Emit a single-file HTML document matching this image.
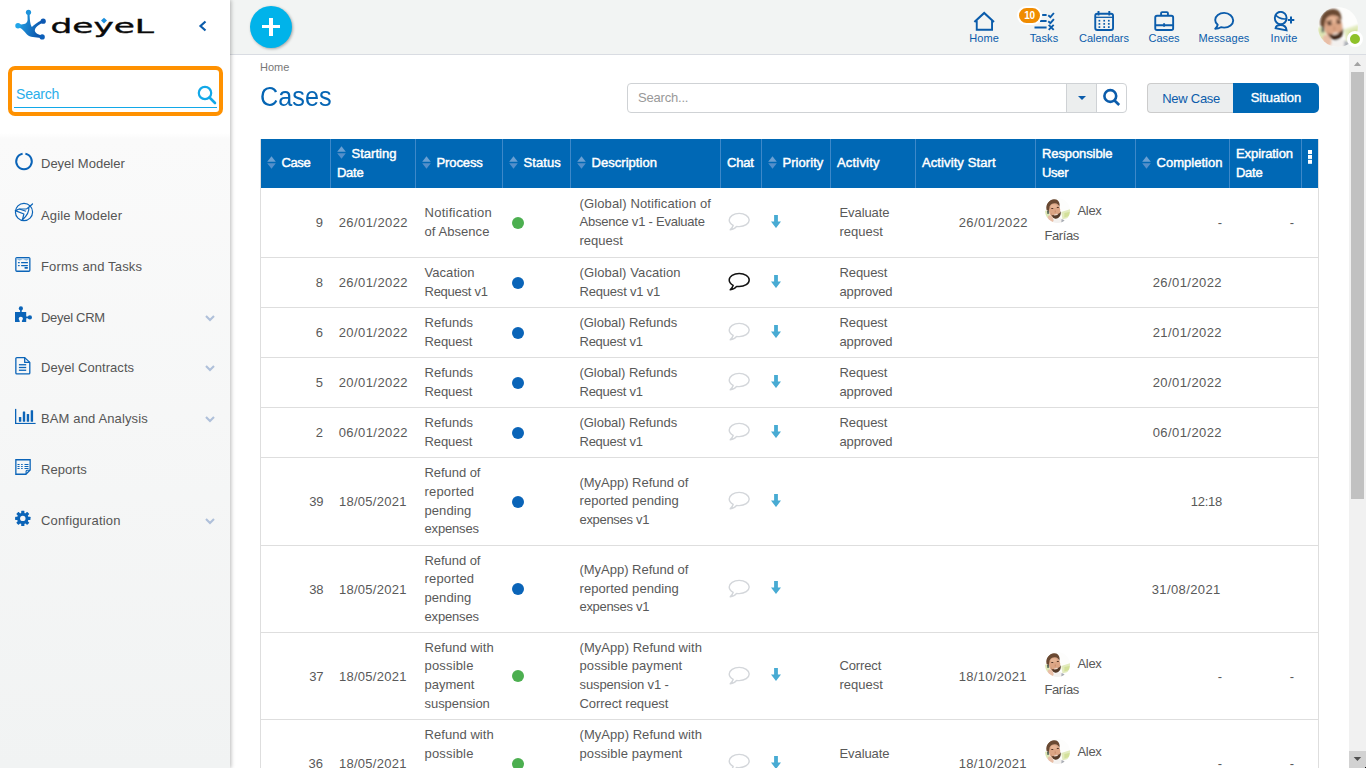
<!DOCTYPE html>
<html lang="en"><head><meta charset="utf-8"><title>Cases</title>
<style>
*{box-sizing:border-box;margin:0;padding:0}
html,body{width:1366px;height:768px;overflow:hidden;background:#fff;font-family:"Liberation Sans",sans-serif;font-size:13px;color:#555}
#side{position:absolute;left:0;top:0;width:230px;height:768px;background:linear-gradient(#fff 0,#fff 133px,#fafafa 139px,#f1f3f3 768px);box-shadow:1px 0 4px rgba(0,0,0,.28);z-index:5}
#top{position:absolute;left:230px;top:0;width:1136px;height:55px;background:#f2f4f3;border-bottom:1px solid #d9dce2}
#main{position:absolute;left:230px;top:56px;width:1119px;height:712px;background:#fff;overflow:hidden}
.nav{position:absolute;left:0;width:230px;height:20px;font-size:13px;color:#555}
.nav span{position:absolute;left:41px;top:3px;line-height:16px;white-space:nowrap}
.nav svg.i{position:absolute;left:14px;top:-3px}
.nav svg.ch{position:absolute;left:205px;top:7.500px}
#plus{position:absolute;left:20px;top:6px;width:42px;height:42px;border-radius:50%;background:#00b3ea;box-shadow:1px 1px 3px rgba(0,0,0,.32)}
#plus:before{content:"";position:absolute;left:12px;top:18.600px;width:17.800px;height:3.700px;background:#fff}
#plus:after{content:"";position:absolute;left:19.100px;top:11.800px;width:3.800px;height:18.200px;background:#fff}
.tb{position:absolute;top:0;height:56px;text-align:center;color:#0b5cab;font-size:11px}
.tb span{position:absolute;left:0;right:0;top:31px;line-height:14px;text-align:center;letter-spacing:.1px}
.tb svg{position:absolute;left:50%;top:9px;transform:translateX(-50%)}
#hdr{position:absolute;left:31px;top:83px;width:1057px;height:49px;background:#0068b5;color:#fff;font-weight:normal;-webkit-text-stroke:.45px #fff;font-size:13px}
.h{position:absolute;top:0;height:49px;border-left:1px solid #3d88c9;display:flex;align-items:center;padding-left:6px;line-height:18.500px;white-space:nowrap}
.h:first-child{border-left:none;padding-left:6px}
.h u,.c u{text-decoration:none}
.s{display:inline-block;margin-right:5.700px;margin-left:-.2px;vertical-align:-1.300px}
#tbl{position:absolute;left:30px;top:83px;width:1059px;height:700px;border-left:1px solid #dedede;border-right:1px solid #dedede}
.row{position:absolute;left:0;width:1057px;border-bottom:1px solid #dedede;box-sizing:content-box}
.c{position:absolute;top:0;height:100%;display:flex;align-items:center;padding:0 8px 0 9.500px;line-height:18.570px;color:#595959;font-size:13px;white-space:nowrap}
.c.r{justify-content:flex-end;padding-right:7px;padding-top:2px}
.chat{position:absolute;left:467.300px;top:calc(50% - 10.300px)}
.arr{position:absolute;left:510px;top:calc(50% - 7.600px)}
.dot{width:12px;height:12px;border-radius:50%;display:block;margin-left:0}
.dot.g{background:#4caf50}.dot.b{background:#0a64b8}
.usr{line-height:24.600px;position:relative;top:1px}
.usr b{font-weight:normal;margin-left:8px;position:relative;top:-1px}
.av{display:inline-block;width:25px;height:25px;vertical-align:-7.600px}
</style></head><body>
<svg width="0" height="0" style="position:absolute"><defs>
<filter id="bl" x="-10%" y="-10%" width="120%" height="120%"><feGaussianBlur stdDeviation=".900"/></filter>
<filter id="bl2" x="-10%" y="-10%" width="120%" height="120%"><feGaussianBlur stdDeviation="1.200"/></filter>
<clipPath id="cc"><circle cx="20" cy="20" r="20"/></clipPath>
</defs></svg>

<div id="side">
 <svg style="position:absolute;left:0;top:0" width="170" height="50" viewBox="0 0 170 50">
  <defs><linearGradient id="lg" x1="0" y1="0" x2="1" y2="0.300"><stop offset="0" stop-color="#27aaea"/><stop offset="1" stop-color="#0a52aa"/></linearGradient></defs>
  <path d="M27.400 12.500L27.600 19.500C27.300 23.500 25 24.800 19 24.300L18 27.200C22 28 24 31 27 34.500C30 37.800 35 36.600 41.500 38.200L42.600 35.400C38 35 35.200 33 34.800 30.500C35 27.200 38 24.600 43.800 22.400L42.300 20C37 22.400 33.800 25 31.800 27C30.300 24 29.700 21 29.600 12.500Z" fill="url(#lg)"/>
  <circle cx="28.500" cy="12.300" r="2.600" fill="#1c93dc"/><circle cx="18" cy="25.700" r="2.700" fill="#22a6e9"/><circle cx="43.200" cy="21.200" r="2.600" fill="#0c58b2"/><circle cx="42.200" cy="36.900" r="2.600" fill="#0c5fba"/>
  <text x="50.500" y="32.700" font-family="DejaVu Sans, Liberation Sans, sans-serif" font-size="18.800" fill="#0a0a0a" stroke="#0a0a0a" stroke-width=".35" textLength="103.500" lengthAdjust="spacingAndGlyphs">deyeL</text>
  <path d="M104 17.800l3 2.800-3 2.800-3-2.800z" fill="#1c8fdc"/>
 </svg>
 <svg style="position:absolute;left:198px;top:20px" width="10" height="12" viewBox="0 0 10 12"><path d="M7.500 1.500L2.500 6l5 4.500" fill="none" stroke="#0b5cab" stroke-width="2.200"/></svg>
 <div style="position:absolute;left:8px;top:66px;width:215px;height:50px;border:4px solid #ff9100;border-radius:7px;background:#fff"></div>
 <div style="position:absolute;left:14px;top:107px;width:203px;height:1px;background:#12a8e8"></div>
 <div style="position:absolute;left:16px;top:86px;font-size:14px;color:#2aaeea;line-height:17px;letter-spacing:-.2px">Search</div>
 <svg style="position:absolute;left:196px;top:84px" width="21" height="21" viewBox="0 0 21 21"><circle cx="9" cy="9" r="6.200" fill="none" stroke="#12a8e8" stroke-width="2.200"/><path d="M13.500 13.500L19 19" stroke="#12a8e8" stroke-width="2.600" stroke-linecap="round"/></svg>

 <div class="nav" style="top:153px"><svg class="i" width="22" height="22" viewBox="0 0 22 22"><path d="M11.400 3.720A7.800 7.800 0 1 1 8.600 3.720" fill="none" stroke="#0b64b8" stroke-width="2"/></svg><span style="letter-spacing:0px">Deyel Modeler</span></div>
 <div class="nav" style="top:205px"><svg class="i" width="22" height="22" viewBox="0 0 22 22"><g fill="none" stroke="#0b64b8" stroke-width="1.200"><circle cx="10" cy="10" r="8.600"/><path d="M18.500 2C15 4.500 13.500 6.800 12.200 7L5.200 7L1.300 8.600L9.900 12L8.300 18.200C12.500 14 15.500 9.500 14.800 5.300Z" fill="#fafafa" stroke-linejoin="round"/><path d="M5.200 7L12 9.300"/></g></svg><span style="letter-spacing:0.13px">Agile Modeler</span></div>
 <div class="nav" style="top:256px"><svg class="i" width="22" height="22" viewBox="0 0 22 22"><rect x="1.850" y="4.550" width="14" height="13.700" rx="1" fill="none" stroke="#0b64b8" stroke-width="1.300"/><path d="M2.500 5.200h12.800v.8l-3 1.800-3.400-1.800-3.400 1.800-3-1.800z" fill="#8fbce3"/><g fill="#0b64b8"><rect x="3.900" y="9" width="1.900" height="1.300" rx=".6"/><rect x="7" y="9" width="7" height="1.300" rx=".6"/><rect x="3.900" y="11.900" width="1.900" height="1.300" rx=".6"/><rect x="7" y="11.900" width="7" height="1.300" rx=".6"/><rect x="10.400" y="14" width="3.600" height="1.700" rx=".8"/></g></svg><span style="letter-spacing:0.16px">Forms and Tasks</span></div>
 <div class="nav" style="top:307px"><svg class="i" width="22" height="22" viewBox="0 0 22 22"><g fill="#0b64b8"><rect x="1" y="8" width="11.200" height="10"/><circle cx="6.900" cy="4.400" r="2.100"/><rect x="6.100" y="5" width="1.600" height="4"/><circle cx="15.900" cy="13.400" r="2.100"/><rect x="12" y="12.500" width="3" height="1.800"/></g><circle cx="6.800" cy="14.800" r="2.100" fill="#f9f9f9"/><rect x="5.700" y="15.500" width="2.200" height="3" fill="#f9f9f9"/></svg><span style="letter-spacing:-0.3px">Deyel CRM</span><svg class="ch" width="10" height="7" viewBox="0 0 10 7"><path d="M1 1l4 4 4-4" fill="none" stroke="#afc0da" stroke-width="2.100"/></svg></div>
 <div class="nav" style="top:357px"><svg class="i" width="22" height="22" viewBox="0 0 22 22"><g fill="none" stroke="#0b64b8" stroke-width="1.300" stroke-linejoin="round"><path d="M1.850 4.600a1 1 0 0 1 1-1h7.850l5.100 4.800v10.500a1 1 0 0 1-1 1h-11.950a1 1 0 0 1-1-1z"/><path d="M10.700 3.600v4.800h5.100"/></g><g fill="#0b64b8"><rect x="4.900" y="10.100" width="7.300" height="1.300"/><rect x="4.900" y="12.850" width="7.300" height="1.300"/><rect x="4.900" y="15.600" width="7.300" height="1.300"/></g></svg><span style="letter-spacing:0.04px">Deyel Contracts</span><svg class="ch" width="10" height="7" viewBox="0 0 10 7"><path d="M1 1l4 4 4-4" fill="none" stroke="#afc0da" stroke-width="2.100"/></svg></div>
 <div class="nav" style="top:408px"><svg class="i" width="24" height="22" viewBox="0 0 24 22"><g fill="#0b64b8"><rect x="1" y="3.900" width="1.300" height="15.100"/><rect x="1" y="17.900" width="20.600" height="1.100"/><rect x="4.900" y="12" width="2.400" height="4.700" rx=".5"/><rect x="8.800" y="6.500" width="2.400" height="10.200" rx=".5"/><rect x="12.750" y="9.100" width="2.400" height="7.600" rx=".5"/><rect x="16.700" y="5.200" width="2.400" height="11.500" rx=".5"/></g></svg><span style="letter-spacing:0.13px">BAM and Analysis</span><svg class="ch" width="10" height="7" viewBox="0 0 10 7"><path d="M1 1l4 4 4-4" fill="none" stroke="#afc0da" stroke-width="2.100"/></svg></div>
 <div class="nav" style="top:459px"><svg class="i" width="22" height="22" viewBox="0 0 22 22"><g fill="none" stroke="#0b64b8" stroke-width="1.300"><path d="M1.850 3.750h14.300v10.300l-4.300 4.200h-10z"/><path d="M16.100 14.200h-3a1 1 0 0 0-1 1v3" stroke-width="1.100"/></g><g fill="#0b64b8"><rect x="3.400" y="8" width="2.300" height="1" rx=".5"/><rect x="7" y="8" width="1.800" height="1" rx=".5"/><rect x="10.400" y="8" width="4.200" height="1" rx=".5"/><rect x="3.400" y="10.050" width="2.300" height="1" rx=".5"/><rect x="7" y="10.050" width="1.800" height="1" rx=".5"/><rect x="10.400" y="10.050" width="4.200" height="1" rx=".5"/><rect x="3.400" y="12.050" width="2.300" height="1" rx=".5"/><rect x="7" y="12.050" width="1.800" height="1" rx=".5"/><rect x="10.400" y="12.050" width="4.200" height="1" rx=".5"/></g></svg><span style="letter-spacing:0.05px">Reports</span></div>
 <div class="nav" style="top:510px"><svg class="i" width="22" height="22" viewBox="0 0 22 22"><g transform="translate(8.800 11.400)"><g fill="#0b64b8"><rect x="-1.600" y="-7.700" width="3.200" height="15.400" rx=".4"/><rect x="-1.600" y="-7.700" width="3.200" height="15.400" rx=".4" transform="rotate(45)"/><rect x="-1.600" y="-7.700" width="3.200" height="15.400" rx=".4" transform="rotate(90)"/><rect x="-1.600" y="-7.700" width="3.200" height="15.400" rx=".4" transform="rotate(135)"/><circle r="5.700"/></g><circle r="2.700" fill="#f4f5f6"/></g></svg><span style="letter-spacing:0.17px">Configuration</span><svg class="ch" width="10" height="7" viewBox="0 0 10 7"><path d="M1 1l4 4 4-4" fill="none" stroke="#afc0da" stroke-width="2.100"/></svg></div>
</div>

<div id="top">
 <div id="plus"></div>
 <svg style="position:absolute;left:0;top:0" width="1136" height="56" viewBox="230 0 1136 56"><g fill="none" stroke="#0b5cab" stroke-width="1.900">
  <path d="M975.200 21.200L984.200 13L993.200 21.200" stroke-width="2.100" stroke-linecap="square"/><path d="M976.750 20.500V29.750H992.050V20.500"/>
  <path d="M1042.200 15H1046.600M1040 21.100H1046.600M1034.500 27.400H1046.600" stroke-width="2"/><path d="M1048.300 15.200l2.100 1.900 3.500-4.100M1048.300 21.300l2.100 1.900 3.500-4.100M1048.700 24.900l5 5M1053.700 24.900l-5 5"/>
  <rect x="1095.250" y="13.750" width="17.800" height="16.200" rx="2"/><path d="M1095.500 17.300h17.400" stroke-width="1.300"/><path d="M1098.500 11v4.500M1109.300 11v4.500"/>
  <rect x="1155.250" y="15.750" width="17.900" height="14.200" rx="1.800"/><path d="M1161.100 15.500v-2.400a1 1 0 0 1 1-1h4.800a1 1 0 0 1 1 1v2.400M1155.500 25.200h17.500M1164.100 23.200v3.600"/>
  <path d="M1224.200 12.900c-5 0-9 3.100-9 7 0 1.900 1 3.700 2.500 4.900-.3 1.600-1.100 2.800-2.500 3.900 2.400-.1 4.300-.7 5.700-1.500 1 .3 2.200.4 3.300.4 5 0 9-3.100 9-7s-4-7.700-9-7.700z" stroke-linejoin="round"/>
  <ellipse cx="1280.700" cy="18.100" rx="5.900" ry="6.200"/><path d="M1275.300 14.500c2.500 3.500 7 4.800 11.300 4.300" stroke-width="1.500"/><path d="M1275.600 14.200c1.500-3 5-4.200 8-2.600-2.500.2-5.500 1.500-8 2.600z" fill="#0b5cab" stroke="none"/><path d="M1275.600 28.200c.3-2.200 2.200-3.200 5-3.200s5.600 1.300 6 5.400z"/><path d="M1291 16.600v6.800M1287.800 20h6.500" stroke-width="2"/>
 </g><g fill="#0b5cab"><rect x="1098.55" y="19.85" width="1.700" height="1.700"/><rect x="1098.55" y="23.05" width="1.700" height="1.700"/><rect x="1098.55" y="26.25" width="1.700" height="1.700"/><rect x="1103.35" y="19.85" width="1.700" height="1.700"/><rect x="1103.35" y="23.05" width="1.700" height="1.700"/><rect x="1103.35" y="26.25" width="1.700" height="1.700"/><rect x="1107.95" y="19.85" width="1.700" height="1.700"/><rect x="1107.95" y="23.05" width="1.700" height="1.700"/><rect x="1107.95" y="26.25" width="1.700" height="1.700"/></g></svg>
 <div class="tb" style="left:714px;width:80px"><span>Home</span></div>
 <div class="tb" style="left:774px;width:80px"><span>Tasks</span></div>
 <div class="tb" style="left:834px;width:80px"><span style="letter-spacing:-.02px">Calendars</span></div>
 <div class="tb" style="left:894px;width:80px"><span style="letter-spacing:-.08px">Cases</span></div>
 <div class="tb" style="left:954px;width:80px"><span>Messages</span></div>
 <div class="tb" style="left:1014px;width:80px"><span>Invite</span></div>
 <div style="position:absolute;left:787px;top:6px;width:25px;height:19px;border-radius:9.500px;background:#f08c00;border:2px solid #fff;color:#fff;font-size:10px;font-weight:bold;line-height:15px;text-align:center;box-sizing:border-box;letter-spacing:-.2px">10</div>
 <svg style="position:absolute;left:1088px;top:7px" width="40" height="40" viewBox="0 0 40 40"><g clip-path="url(#cc)"><rect width="40" height="40" fill="#fdfdfc"/><g filter="url(#bl)">
<path d="M26 22.500L41 17.500V31L28 34z" fill="#e2ebbd"/><path d="M31 24l10-2v6l-10 3z" fill="#d3e09a"/><ellipse cx="2.500" cy="27" rx="5" ry="7" fill="#dde6b4"/>
<path d="M8 41L12 35 24 32 31 35V41z" fill="#f3f1ef"/><path d="M26.500 33.500l4.500 2v5h-5z" fill="#a9adb5"/>
<ellipse cx="15.200" cy="19.500" rx="9.200" ry="11.800" fill="#dca585" transform="rotate(-6 15.200 19.500)"/>
<ellipse cx="14" cy="13" rx="5" ry="3" fill="#e6b596"/>
<path d="M2.500 19C.8 9.500 6 2.500 14 2c5-.400 8.500 2 9.300 7.500.2 1.500 0 3-.3 4.500-1.500-3.500-4-5.700-7.500-5.700-3.500 0-6.500 1.500-8 5.200L6 21z" fill="#6b4a33"/>
<path d="M9.500 25c1 2 3 2.800 5.500 2.300 3-.800 6-1.200 8.500-3.300.8-1 1.400-2 1.600-3.500.8 5.500-.700 9.500-4 11.600-3 1.700-6.300 1.400-8.700-1.300-1.400-1.700-2.200-3.700-2.400-5.800z" fill="#432c1f"/>
<ellipse cx="17.500" cy="26.600" rx="3.200" ry="1.200" fill="#ecd5c8" transform="rotate(-10 17.500 26.600)"/>
<ellipse cx="11.600" cy="16.900" rx="2.300" ry="1.400" fill="#3a2419"/><ellipse cx="20.600" cy="15.300" rx="2.300" ry="1.400" fill="#3a2419"/><path d="M8.500 14.800l5.500-1.200M18 12.800l5-.8" stroke="#5a3d2b" stroke-width="1.200" fill="none"/>
<path d="M16 18.500l1.700 4.200-2.300.5z" fill="#c58b6a"/>
<rect x="3.600" y="20" width="2.500" height="5.500" rx="1" fill="#46564f"/>
<ellipse cx="9" cy="33.500" rx="4.200" ry="6" fill="#e8bea6" transform="rotate(-25 9 33.500)"/>
</g></g></svg>
 <div style="position:absolute;left:1117px;top:31px;width:16px;height:16px;border-radius:50%;background:#8fc22a;border:3px solid #fff"></div>
</div>

<div id="main">
 <div style="position:absolute;left:30px;top:5px;font-size:11px;color:#777;line-height:13px">Home</div>
 <div style="position:absolute;left:30px;top:25px;font-size:27px;color:#0565b4;line-height:32px;letter-spacing:0;transform:scaleX(.935);transform-origin:0 0" id="ttl">Cases</div>
 <div style="position:absolute;left:397px;top:27px;width:500px;height:30px;border:1px solid #cfd2d5;border-radius:4px;background:#fff"></div>
 <div style="position:absolute;left:836px;top:28px;width:31px;height:28px;background:#eceeee;border-left:1px solid #cfd2d5;border-right:1px solid #cfd2d5"></div>
 <div style="position:absolute;left:847.800px;top:40.200px;border:4.200px solid transparent;border-top:4.700px solid #0b5cab;border-bottom:none"></div>
 <svg style="position:absolute;left:871px;top:31px" width="22" height="22" viewBox="0 0 22 22"><circle cx="9.300" cy="9" r="5.900" fill="none" stroke="#0b5cab" stroke-width="2.600"/><path d="M13.300 13.300L18.200 17.900" stroke="#0b5cab" stroke-width="2.700"/></svg>
 <div style="position:absolute;left:408px;top:34px;font-size:13px;color:#999;line-height:16px;letter-spacing:-.2px">Search...</div>
 <div style="position:absolute;left:917px;top:27px;width:87px;height:30px;border:1px solid #ccc;border-right:none;border-radius:4px 0 0 4px;background:#eceeef;color:#0b5cab;font-size:13px;line-height:29px;text-align:center;letter-spacing:-.27px;padding-left:.3px" id="nc">New Case</div>
 <div style="position:absolute;left:1003px;top:27px;width:86px;height:30px;border-radius:0 5px 5px 0;background:#0068b5;color:#fff;font-size:13px;-webkit-text-stroke:.4px #fff;line-height:29px;text-align:center;letter-spacing:0px" id="sit">Situation</div>

 <div id="tbl">
<div class="row" style="top:49px;height:69px"><div class="c r" style="left:0px;width:69px;"><span><u>9</u></span></div><div class="c r" style="left:69px;width:85px;"><span><u style="letter-spacing:0.421px">26/01/2022</u></span></div><div class="c " style="left:154px;width:87px;"><span><u style="letter-spacing:0.273px">Notification</u><br><u style="letter-spacing:0.064px">of Absence</u></span></div><div class="c " style="left:241px;width:68px;"><span class="dot g"></span></div><div class="c " style="left:309px;width:150px;"><span><u style="letter-spacing:0.123px">(Global) Notification of</u><br><u style="letter-spacing:-0.230px">Absence v1 - Evaluate</u><br><u style="letter-spacing:0.000px">request</u></span></div><svg class="chat" viewBox="0 0 23 19" width="23" height="19"><path d="M11.200 1.400c-5.500 0-10 2.950-10 6.600 0 2.200 1.600 4.100 4 5.300-.5 1.800-1.500 3.300-3 4.500 2.800-.3 5-1.500 6.400-3.400.8.100 1.700.200 2.600.200 5.500 0 10-2.950 10-6.600s-4.500-6.600-10-6.600z" fill="none" stroke="#d3d6da" stroke-width="1.400" stroke-linejoin="round"/></svg><svg class="arr" viewBox="0 0 10 13.200" width="10" height="13.200"><path d="M3.100 0h3.800v6.500h3.100L5 13.100 0 6.500h3.100z" fill="#48abd3"/></svg><div class="c " style="left:569px;width:85px;"><span><u style="letter-spacing:-0.084px">Evaluate</u><br><u style="letter-spacing:0.000px">request</u></span></div><div class="c r" style="left:654px;width:120px;"><span><u style="letter-spacing:0.421px">26/01/2022</u></span></div><div class="c " style="left:774px;width:100px;"><span class="usr"><svg class="av" width="25" height="25" viewBox="0 0 40 40"><g clip-path="url(#cc)"><rect width="40" height="40" fill="#fdfdfc"/><g filter="url(#bl2)"><path d="M26 22.500L41 17.500V31L28 34z" fill="#e2ebbd"/><path d="M31 24l10-2v6l-10 3z" fill="#d3e09a"/><ellipse cx="2.500" cy="27" rx="5" ry="7" fill="#dde6b4"/><path d="M8 41L12 35 24 32 31 35V41z" fill="#f3f1ef"/><path d="M26.500 33.500l4.500 2v5h-5z" fill="#a9adb5"/><ellipse cx="15.200" cy="19.500" rx="9.200" ry="11.800" fill="#dca585" transform="rotate(-6 15.200 19.500)"/><ellipse cx="14" cy="13" rx="5" ry="3" fill="#e6b596"/><path d="M2.500 19C.8 9.500 6 2.500 14 2c5-.400 8.500 2 9.300 7.500.2 1.500 0 3-.3 4.500-1.500-3.500-4-5.700-7.500-5.700-3.500 0-6.500 1.500-8 5.200L6 21z" fill="#6b4a33"/><path d="M9.500 25c1 2 3 2.800 5.500 2.300 3-.800 6-1.200 8.500-3.300.8-1 1.400-2 1.600-3.500.8 5.500-.700 9.500-4 11.600-3 1.700-6.300 1.400-8.700-1.300-1.400-1.700-2.200-3.700-2.400-5.800z" fill="#553a29"/><ellipse cx="17.500" cy="26.600" rx="3.200" ry="1.200" fill="#ecd5c8" transform="rotate(-10 17.500 26.600)"/><ellipse cx="11.600" cy="16.700" rx="1.900" ry=".900" fill="#4a2f22"/><ellipse cx="20.600" cy="15.100" rx="1.900" ry=".900" fill="#4a2f22"/><path d="M16 18.500l1.700 4.200-2.300.5z" fill="#c58b6a"/><rect x="3.600" y="20" width="2.500" height="5.500" rx="1" fill="#46564f"/><ellipse cx="9" cy="33.500" rx="4.200" ry="6" fill="#e8bea6" transform="rotate(-25 9 33.500)"/></g></g></svg><b><u style="letter-spacing:-0.333px">Alex</u></b><br><u style="letter-spacing:-0.400px">Farías</u></span></div><div class="c r" style="left:874px;width:94px;"><span><u>-</u></span></div><div class="c r" style="left:968px;width:72px;"><span><u>-</u></span></div></div>
<div class="row" style="top:119px;height:49px"><div class="c r" style="left:0px;width:69px;"><span><u>8</u></span></div><div class="c r" style="left:69px;width:85px;"><span><u style="letter-spacing:0.421px">26/01/2022</u></span></div><div class="c " style="left:154px;width:87px;"><span><u style="letter-spacing:0.059px">Vacation</u><br><u style="letter-spacing:-0.258px">Request v1</u></span></div><div class="c " style="left:241px;width:68px;"><span class="dot b"></span></div><div class="c " style="left:309px;width:150px;"><span><u style="letter-spacing:0.101px">(Global) Vacation</u><br><u style="letter-spacing:-0.191px">Request v1 v1</u></span></div><svg class="chat" viewBox="0 0 23 19" width="23" height="19"><path d="M11.200 1.400c-5.500 0-10 2.950-10 6.600 0 2.200 1.600 4.100 4 5.300-.5 1.800-1.500 3.300-3 4.500 2.800-.3 5-1.500 6.400-3.400.8.100 1.700.200 2.600.200 5.500 0 10-2.950 10-6.600s-4.500-6.600-10-6.600z" fill="none" stroke="#111" stroke-width="1.500" stroke-linejoin="round"/></svg><svg class="arr" viewBox="0 0 10 13.200" width="10" height="13.200"><path d="M3.100 0h3.800v6.500h3.100L5 13.100 0 6.500h3.100z" fill="#48abd3"/></svg><div class="c " style="left:569px;width:85px;"><span><u style="letter-spacing:-0.102px">Request</u><br><u style="letter-spacing:-0.160px">approved</u></span></div><div class="c r" style="left:874px;width:94px;"><span><u style="letter-spacing:0.421px">26/01/2022</u></span></div></div>
<div class="row" style="top:169px;height:49px"><div class="c r" style="left:0px;width:69px;"><span><u>6</u></span></div><div class="c r" style="left:69px;width:85px;"><span><u style="letter-spacing:0.421px">20/01/2022</u></span></div><div class="c " style="left:154px;width:87px;"><span><u style="letter-spacing:0.014px">Refunds</u><br><u style="letter-spacing:-0.102px">Request</u></span></div><div class="c " style="left:241px;width:68px;"><span class="dot b"></span></div><div class="c " style="left:309px;width:150px;"><span><u style="letter-spacing:-0.041px">(Global) Refunds</u><br><u style="letter-spacing:-0.258px">Request v1</u></span></div><svg class="chat" viewBox="0 0 23 19" width="23" height="19"><path d="M11.200 1.400c-5.500 0-10 2.950-10 6.600 0 2.200 1.600 4.100 4 5.300-.5 1.800-1.500 3.300-3 4.500 2.800-.3 5-1.500 6.400-3.400.8.100 1.700.200 2.600.200 5.500 0 10-2.950 10-6.600s-4.500-6.600-10-6.600z" fill="none" stroke="#d3d6da" stroke-width="1.400" stroke-linejoin="round"/></svg><svg class="arr" viewBox="0 0 10 13.200" width="10" height="13.200"><path d="M3.100 0h3.800v6.500h3.100L5 13.100 0 6.500h3.100z" fill="#48abd3"/></svg><div class="c " style="left:569px;width:85px;"><span><u style="letter-spacing:-0.102px">Request</u><br><u style="letter-spacing:-0.160px">approved</u></span></div><div class="c r" style="left:874px;width:94px;"><span><u style="letter-spacing:0.421px">21/01/2022</u></span></div></div>
<div class="row" style="top:219px;height:49px"><div class="c r" style="left:0px;width:69px;"><span><u>5</u></span></div><div class="c r" style="left:69px;width:85px;"><span><u style="letter-spacing:0.421px">20/01/2022</u></span></div><div class="c " style="left:154px;width:87px;"><span><u style="letter-spacing:0.014px">Refunds</u><br><u style="letter-spacing:-0.102px">Request</u></span></div><div class="c " style="left:241px;width:68px;"><span class="dot b"></span></div><div class="c " style="left:309px;width:150px;"><span><u style="letter-spacing:-0.041px">(Global) Refunds</u><br><u style="letter-spacing:-0.258px">Request v1</u></span></div><svg class="chat" viewBox="0 0 23 19" width="23" height="19"><path d="M11.200 1.400c-5.500 0-10 2.950-10 6.600 0 2.200 1.600 4.100 4 5.300-.5 1.800-1.500 3.300-3 4.500 2.800-.3 5-1.500 6.400-3.400.8.100 1.700.200 2.600.200 5.500 0 10-2.950 10-6.600s-4.500-6.600-10-6.600z" fill="none" stroke="#d3d6da" stroke-width="1.400" stroke-linejoin="round"/></svg><svg class="arr" viewBox="0 0 10 13.200" width="10" height="13.200"><path d="M3.100 0h3.800v6.500h3.100L5 13.100 0 6.500h3.100z" fill="#48abd3"/></svg><div class="c " style="left:569px;width:85px;"><span><u style="letter-spacing:-0.102px">Request</u><br><u style="letter-spacing:-0.160px">approved</u></span></div><div class="c r" style="left:874px;width:94px;"><span><u style="letter-spacing:0.421px">20/01/2022</u></span></div></div>
<div class="row" style="top:269px;height:49px"><div class="c r" style="left:0px;width:69px;"><span><u>2</u></span></div><div class="c r" style="left:69px;width:85px;"><span><u style="letter-spacing:0.421px">06/01/2022</u></span></div><div class="c " style="left:154px;width:87px;"><span><u style="letter-spacing:0.014px">Refunds</u><br><u style="letter-spacing:-0.102px">Request</u></span></div><div class="c " style="left:241px;width:68px;"><span class="dot b"></span></div><div class="c " style="left:309px;width:150px;"><span><u style="letter-spacing:-0.041px">(Global) Refunds</u><br><u style="letter-spacing:-0.258px">Request v1</u></span></div><svg class="chat" viewBox="0 0 23 19" width="23" height="19"><path d="M11.200 1.400c-5.500 0-10 2.950-10 6.600 0 2.200 1.600 4.100 4 5.300-.5 1.800-1.500 3.300-3 4.500 2.800-.3 5-1.500 6.400-3.400.8.100 1.700.200 2.600.200 5.500 0 10-2.950 10-6.600s-4.500-6.600-10-6.600z" fill="none" stroke="#d3d6da" stroke-width="1.400" stroke-linejoin="round"/></svg><svg class="arr" viewBox="0 0 10 13.200" width="10" height="13.200"><path d="M3.100 0h3.800v6.500h3.100L5 13.100 0 6.500h3.100z" fill="#48abd3"/></svg><div class="c " style="left:569px;width:85px;"><span><u style="letter-spacing:-0.102px">Request</u><br><u style="letter-spacing:-0.160px">approved</u></span></div><div class="c r" style="left:874px;width:94px;"><span><u style="letter-spacing:0.421px">06/01/2022</u></span></div></div>
<div class="row" style="top:319px;height:87px"><div class="c r" style="left:0px;width:69px;"><span><u style="letter-spacing:-0.400px">39</u></span></div><div class="c r" style="left:69px;width:85px;"><span><u style="letter-spacing:0.269px;margin-right:1.300px">18/05/2021</u></span></div><div class="c " style="left:154px;width:87px;"><span><u style="letter-spacing:-0.050px">Refund of</u><br><u style="letter-spacing:0.169px">reported</u><br><u style="letter-spacing:0.066px">pending</u><br><u style="letter-spacing:-0.160px">expenses</u></span></div><div class="c " style="left:241px;width:68px;"><span class="dot b"></span></div><div class="c " style="left:309px;width:150px;"><span><u style="letter-spacing:-0.018px">(MyApp) Refund of</u><br><u style="letter-spacing:0.062px">reported pending</u><br><u style="letter-spacing:-0.310px">expenses v1</u></span></div><svg class="chat" viewBox="0 0 23 19" width="23" height="19"><path d="M11.200 1.400c-5.500 0-10 2.950-10 6.600 0 2.200 1.600 4.100 4 5.300-.5 1.800-1.500 3.300-3 4.500 2.800-.3 5-1.500 6.400-3.400.8.100 1.700.200 2.600.200 5.500 0 10-2.950 10-6.600s-4.500-6.600-10-6.600z" fill="none" stroke="#d3d6da" stroke-width="1.400" stroke-linejoin="round"/></svg><svg class="arr" viewBox="0 0 10 13.200" width="10" height="13.200"><path d="M3.100 0h3.800v6.500h3.100L5 13.100 0 6.500h3.100z" fill="#48abd3"/></svg><div class="c r" style="left:874px;width:94px;"><span><u style="letter-spacing:-0.250px">12:18</u></span></div></div>
<div class="row" style="top:407px;height:86px"><div class="c r" style="left:0px;width:69px;"><span><u style="letter-spacing:-0.400px">38</u></span></div><div class="c r" style="left:69px;width:85px;"><span><u style="letter-spacing:0.269px;margin-right:1.300px">18/05/2021</u></span></div><div class="c " style="left:154px;width:87px;"><span><u style="letter-spacing:-0.050px">Refund of</u><br><u style="letter-spacing:0.169px">reported</u><br><u style="letter-spacing:0.066px">pending</u><br><u style="letter-spacing:-0.160px">expenses</u></span></div><div class="c " style="left:241px;width:68px;"><span class="dot b"></span></div><div class="c " style="left:309px;width:150px;"><span><u style="letter-spacing:-0.018px">(MyApp) Refund of</u><br><u style="letter-spacing:0.062px">reported pending</u><br><u style="letter-spacing:-0.310px">expenses v1</u></span></div><svg class="chat" viewBox="0 0 23 19" width="23" height="19"><path d="M11.200 1.400c-5.500 0-10 2.950-10 6.600 0 2.200 1.600 4.100 4 5.300-.5 1.800-1.500 3.300-3 4.500 2.800-.3 5-1.500 6.400-3.400.8.100 1.700.200 2.600.200 5.500 0 10-2.950 10-6.600s-4.500-6.600-10-6.600z" fill="none" stroke="#d3d6da" stroke-width="1.400" stroke-linejoin="round"/></svg><svg class="arr" viewBox="0 0 10 13.200" width="10" height="13.200"><path d="M3.100 0h3.800v6.500h3.100L5 13.100 0 6.500h3.100z" fill="#48abd3"/></svg><div class="c r" style="left:874px;width:94px;"><span><u style="letter-spacing:0.389px;margin-right:1.300px">31/08/2021</u></span></div></div>
<div class="row" style="top:494px;height:86px"><div class="c r" style="left:0px;width:69px;"><span><u style="letter-spacing:-0.400px">37</u></span></div><div class="c r" style="left:69px;width:85px;"><span><u style="letter-spacing:0.269px;margin-right:1.300px">18/05/2021</u></span></div><div class="c " style="left:154px;width:87px;"><span><u style="letter-spacing:0.050px">Refund with</u><br><u style="letter-spacing:0.168px">possible</u><br><u style="letter-spacing:0.000px">payment</u><br><u style="letter-spacing:-0.048px">suspension</u></span></div><div class="c " style="left:241px;width:68px;"><span class="dot g"></span></div><div class="c " style="left:309px;width:150px;"><span><u style="letter-spacing:0.056px">(MyApp) Refund with</u><br><u style="letter-spacing:0.100px">possible payment</u><br><u style="letter-spacing:-0.116px">suspension v1 -</u><br><u style="letter-spacing:-0.048px">Correct request</u></span></div><svg class="chat" viewBox="0 0 23 19" width="23" height="19"><path d="M11.200 1.400c-5.500 0-10 2.950-10 6.600 0 2.200 1.600 4.100 4 5.300-.5 1.800-1.500 3.300-3 4.500 2.800-.3 5-1.500 6.400-3.400.8.100 1.700.200 2.600.200 5.500 0 10-2.950 10-6.600s-4.500-6.600-10-6.600z" fill="none" stroke="#d3d6da" stroke-width="1.400" stroke-linejoin="round"/></svg><svg class="arr" viewBox="0 0 10 13.200" width="10" height="13.200"><path d="M3.100 0h3.800v6.500h3.100L5 13.100 0 6.500h3.100z" fill="#48abd3"/></svg><div class="c " style="left:569px;width:85px;"><span><u style="letter-spacing:-0.132px">Correct</u><br><u style="letter-spacing:0.000px">request</u></span></div><div class="c r" style="left:654px;width:120px;"><span><u style="letter-spacing:0.277px;margin-right:1.300px">18/10/2021</u></span></div><div class="c " style="left:774px;width:100px;"><span class="usr"><svg class="av" width="25" height="25" viewBox="0 0 40 40"><g clip-path="url(#cc)"><rect width="40" height="40" fill="#fdfdfc"/><g filter="url(#bl2)"><path d="M26 22.500L41 17.500V31L28 34z" fill="#e2ebbd"/><path d="M31 24l10-2v6l-10 3z" fill="#d3e09a"/><ellipse cx="2.500" cy="27" rx="5" ry="7" fill="#dde6b4"/><path d="M8 41L12 35 24 32 31 35V41z" fill="#f3f1ef"/><path d="M26.500 33.500l4.500 2v5h-5z" fill="#a9adb5"/><ellipse cx="15.200" cy="19.500" rx="9.200" ry="11.800" fill="#dca585" transform="rotate(-6 15.200 19.500)"/><ellipse cx="14" cy="13" rx="5" ry="3" fill="#e6b596"/><path d="M2.500 19C.8 9.500 6 2.500 14 2c5-.400 8.500 2 9.300 7.500.2 1.500 0 3-.3 4.500-1.500-3.500-4-5.700-7.500-5.700-3.500 0-6.500 1.500-8 5.200L6 21z" fill="#6b4a33"/><path d="M9.500 25c1 2 3 2.800 5.500 2.300 3-.800 6-1.200 8.500-3.300.8-1 1.400-2 1.600-3.500.8 5.500-.700 9.500-4 11.600-3 1.700-6.300 1.400-8.700-1.300-1.400-1.700-2.200-3.700-2.400-5.800z" fill="#553a29"/><ellipse cx="17.500" cy="26.600" rx="3.200" ry="1.200" fill="#ecd5c8" transform="rotate(-10 17.500 26.600)"/><ellipse cx="11.600" cy="16.700" rx="1.900" ry=".900" fill="#4a2f22"/><ellipse cx="20.600" cy="15.100" rx="1.900" ry=".900" fill="#4a2f22"/><path d="M16 18.500l1.700 4.200-2.300.5z" fill="#c58b6a"/><rect x="3.600" y="20" width="2.500" height="5.500" rx="1" fill="#46564f"/><ellipse cx="9" cy="33.500" rx="4.200" ry="6" fill="#e8bea6" transform="rotate(-25 9 33.500)"/></g></g></svg><b><u style="letter-spacing:-0.333px">Alex</u></b><br><u style="letter-spacing:-0.400px">Farías</u></span></div><div class="c r" style="left:874px;width:94px;"><span><u>-</u></span></div><div class="c r" style="left:968px;width:72px;"><span><u>-</u></span></div></div>
<div class="row" style="top:581px;height:87px"><div class="c r" style="left:0px;width:69px;"><span><u>36</u></span></div><div class="c r" style="left:69px;width:85px;"><span><u style="letter-spacing:0.269px;margin-right:1.300px">18/05/2021</u></span></div><div class="c " style="left:154px;width:87px;"><span><u style="letter-spacing:0.050px">Refund with</u><br><u style="letter-spacing:0.168px">possible</u><br><u style="letter-spacing:0.000px">payment</u><br><u style="letter-spacing:-0.048px">suspension</u></span></div><div class="c " style="left:241px;width:68px;"><span class="dot g"></span></div><div class="c " style="left:309px;width:150px;"><span><u style="letter-spacing:0.056px">(MyApp) Refund with</u><br><u style="letter-spacing:0.100px">possible payment</u><br><u style="letter-spacing:-0.116px">suspension v1 -</u><br><u>Evaluate request</u></span></div><svg class="chat" viewBox="0 0 23 19" width="23" height="19"><path d="M11.200 1.400c-5.500 0-10 2.950-10 6.600 0 2.200 1.600 4.100 4 5.300-.5 1.800-1.500 3.300-3 4.500 2.800-.3 5-1.500 6.400-3.400.8.100 1.700.200 2.600.200 5.500 0 10-2.950 10-6.600s-4.500-6.600-10-6.600z" fill="none" stroke="#d3d6da" stroke-width="1.400" stroke-linejoin="round"/></svg><svg class="arr" viewBox="0 0 10 13.200" width="10" height="13.200"><path d="M3.100 0h3.800v6.500h3.100L5 13.100 0 6.500h3.100z" fill="#48abd3"/></svg><div class="c " style="left:569px;width:85px;"><span><u style="letter-spacing:-0.084px">Evaluate</u><br><u style="letter-spacing:0.000px">request</u></span></div><div class="c r" style="left:654px;width:120px;"><span><u style="letter-spacing:0.277px;margin-right:1.300px">18/10/2021</u></span></div><div class="c " style="left:774px;width:100px;"><span class="usr"><svg class="av" width="25" height="25" viewBox="0 0 40 40"><g clip-path="url(#cc)"><rect width="40" height="40" fill="#fdfdfc"/><g filter="url(#bl2)"><path d="M26 22.500L41 17.500V31L28 34z" fill="#e2ebbd"/><path d="M31 24l10-2v6l-10 3z" fill="#d3e09a"/><ellipse cx="2.500" cy="27" rx="5" ry="7" fill="#dde6b4"/><path d="M8 41L12 35 24 32 31 35V41z" fill="#f3f1ef"/><path d="M26.500 33.500l4.500 2v5h-5z" fill="#a9adb5"/><ellipse cx="15.200" cy="19.500" rx="9.200" ry="11.800" fill="#dca585" transform="rotate(-6 15.200 19.500)"/><ellipse cx="14" cy="13" rx="5" ry="3" fill="#e6b596"/><path d="M2.500 19C.8 9.500 6 2.500 14 2c5-.400 8.500 2 9.300 7.500.2 1.500 0 3-.3 4.500-1.500-3.500-4-5.700-7.500-5.700-3.500 0-6.500 1.500-8 5.200L6 21z" fill="#6b4a33"/><path d="M9.500 25c1 2 3 2.800 5.500 2.300 3-.800 6-1.200 8.500-3.300.8-1 1.400-2 1.600-3.500.8 5.500-.700 9.500-4 11.600-3 1.700-6.300 1.400-8.700-1.300-1.400-1.700-2.200-3.700-2.400-5.800z" fill="#553a29"/><ellipse cx="17.500" cy="26.600" rx="3.200" ry="1.200" fill="#ecd5c8" transform="rotate(-10 17.500 26.600)"/><ellipse cx="11.600" cy="16.700" rx="1.900" ry=".900" fill="#4a2f22"/><ellipse cx="20.600" cy="15.100" rx="1.900" ry=".900" fill="#4a2f22"/><path d="M16 18.500l1.700 4.200-2.300.5z" fill="#c58b6a"/><rect x="3.600" y="20" width="2.500" height="5.500" rx="1" fill="#46564f"/><ellipse cx="9" cy="33.500" rx="4.200" ry="6" fill="#e8bea6" transform="rotate(-25 9 33.500)"/></g></g></svg><b><u style="letter-spacing:-0.333px">Alex</u></b><br><u style="letter-spacing:-0.400px">Farías</u></span></div><div class="c r" style="left:874px;width:94px;"><span><u>-</u></span></div><div class="c r" style="left:968px;width:72px;"><span><u>-</u></span></div></div>
 </div>
 <div id="hdr">
  <div class="h" style="left:0px;width:69px"><span><svg class="s" width="9" height="13" viewBox="0 0 9 13"><path d="M4.500 .3L8.800 5.800H.2z" fill="#6aa0d3"/><path d="M4.500 12.700L8.800 7.200H.2z" fill="#548fca"/></svg><u style="letter-spacing:-0.38px">Case</u></span></div>
  <div class="h" style="left:69px;width:85px"><span><svg class="s" width="9" height="13" viewBox="0 0 9 13"><path d="M4.500 .3L8.800 5.800H.2z" fill="#6aa0d3"/><path d="M4.500 12.700L8.800 7.200H.2z" fill="#548fca"/></svg><u style="letter-spacing:0.03px">Starting</u><br><u style="letter-spacing:-0.28px">Date</u></span></div>
  <div class="h" style="left:154px;width:87px"><span><svg class="s" width="9" height="13" viewBox="0 0 9 13"><path d="M4.500 .3L8.800 5.800H.2z" fill="#6aa0d3"/><path d="M4.500 12.700L8.800 7.200H.2z" fill="#548fca"/></svg><u style="letter-spacing:-0.10px">Process</u></span></div>
  <div class="h" style="left:241px;width:68px"><span><svg class="s" width="9" height="13" viewBox="0 0 9 13"><path d="M4.500 .3L8.800 5.800H.2z" fill="#6aa0d3"/><path d="M4.500 12.700L8.800 7.200H.2z" fill="#548fca"/></svg><u style="letter-spacing:0.08px">Status</u></span></div>
  <div class="h" style="left:309px;width:150px"><span><svg class="s" width="9" height="13" viewBox="0 0 9 13"><path d="M4.500 .3L8.800 5.800H.2z" fill="#6aa0d3"/><path d="M4.500 12.700L8.800 7.200H.2z" fill="#548fca"/></svg><u style="letter-spacing:0.04px">Description</u></span></div>
  <div class="h" style="left:459px;width:41px"><span><u style="letter-spacing:-0.17px">Chat</u></span></div>
  <div class="h" style="left:500px;width:69px"><span><svg class="s" width="9" height="13" viewBox="0 0 9 13"><path d="M4.500 .3L8.800 5.800H.2z" fill="#6aa0d3"/><path d="M4.500 12.700L8.800 7.200H.2z" fill="#548fca"/></svg><u style="letter-spacing:0.06px">Priority</u></span></div>
  <div class="h" style="left:569px;width:85px"><span><u style="letter-spacing:0.19px">Activity</u></span></div>
  <div class="h" style="left:654px;width:120px"><span><u style="letter-spacing:0.10px">Activity Start</u></span></div>
  <div class="h" style="left:774px;width:100px"><span><u style="letter-spacing:-0.10px">Responsible</u><br><u style="letter-spacing:-0.33px">User</u></span></div>
  <div class="h" style="left:874px;width:94px"><span><svg class="s" width="9" height="13" viewBox="0 0 9 13"><path d="M4.500 .3L8.800 5.800H.2z" fill="#6aa0d3"/><path d="M4.500 12.700L8.800 7.200H.2z" fill="#548fca"/></svg><u style="letter-spacing:0.03px">Completion</u></span></div>
  <div class="h" style="left:968px;width:72px"><span><u style="letter-spacing:-0.09px">Expiration</u><br><u style="letter-spacing:-0.28px">Date</u></span></div>
  <div class="h" style="left:1040px;width:17px;padding:0"><b style="position:absolute;left:5.500px;top:10.700px;width:4.500px;height:4px;background:#fff;box-shadow:0 4.900px 0 #fff,0 9.800px 0 #fff"></b></div>
 </div>
</div>

<svg id="sb" style="position:absolute;left:1349px;top:55px" width="17" height="713" viewBox="0 0 17 713">
 <rect width="17" height="713" fill="#f1f1f1"/>
 <path d="M4.900 10.900L8.500 6.800L12.100 10.900z" fill="#a3a3a3"/>
 <rect x="2" y="17" width="13" height="427" fill="#c1c1c1"/>
 <rect x="0" y="696" width="17" height="17" fill="#d2d2d2"/>
 <path d="M4.700 701.900L12.200 701.900L8.450 706z" fill="#505050"/>
 <rect x="16" y="712" width="1" height="1" fill="#111"/>
</svg>
</body></html>
